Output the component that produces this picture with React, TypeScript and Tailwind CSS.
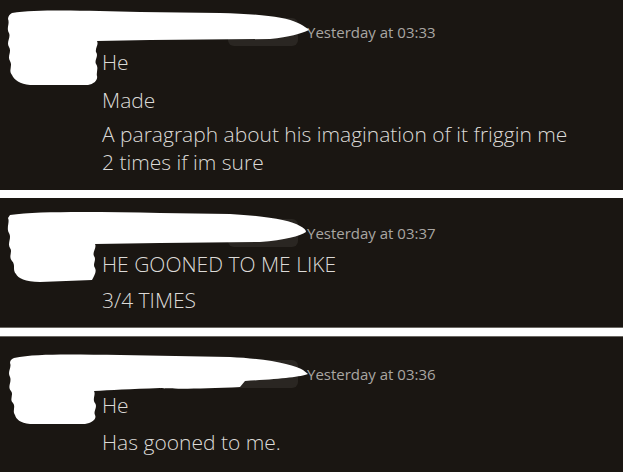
import React from 'react';

type Msg = {
  time: string;
  lines: { text: React.ReactNode; mt: string }[];
  pad: string;
  blob: string;
  border?: string;
};

const messages: Msg[] = [
  {
    time: 'Yesterday at 03:33',
    pad: 'pt-[18px] pb-[14px] h-[190px]',
    blob:
      'M12 13 C40 9 90 11 140 12 L220 13 C260 14 285 17 298 23 C304 26 307 28 309 30 C300 34 290 37 270 39 L150 40 L97 41 C99 45 95 48 96 52 C99 56 94 60 96 64 C99 68 96 72 97 76 C98 80 94 84 88 85 L30 85 C20 84 14 80 12 75 C8 70 13 66 10 61 C7 56 12 52 9 47 C6 42 11 38 9 33 C6 28 10 24 8 19 C8 16 10 14 12 13 Z',
    lines: [
      { text: 'He', mt: 'mt-[2px]' },
      { text: 'Made', mt: 'mt-[10px]' },
      {
        text: (
          <>
            A paragraph about his imagination of it friggin me
            <br />2 times if im sure
          </>
        ),
        mt: 'mt-[6px]',
      },
    ],
  },
  {
    time: 'Yesterday at 03:37',
    pad: 'pt-[21px] h-[130px]',
    border: 'border-b border-[#6b6863]',
    blob:
      'M10 17 C40 13 100 14 160 15 L230 16 C265 18 290 22 300 28 C304 30 306 32 306 34 C300 38 285 42 260 44 L160 45 L95 46 C97 50 92 54 94 58 C97 62 92 66 95 70 C97 74 94 78 92 82 L40 84 C25 84 18 80 16 76 C12 72 16 67 12 63 C8 58 13 54 10 50 C7 45 12 40 9 35 C6 30 10 24 8 20 Z',
    lines: [
      { text: 'HE GOONED TO ME LIKE', mt: 'mt-[3px]' },
      { text: '3/4 TIMES', mt: 'mt-[8px]' },
    ],
  },
  {
    time: 'Yesterday at 03:36',
    pad: 'pt-[23px] h-[136px]',
    border: 'border-t border-[#6b6863]',
    blob:
      'M14 21 C40 16 80 18 120 18 L230 20 C270 22 295 28 303 33 L308 37 C300 40 280 42 245 44 L240 50 C200 52 170 52 160 51 C130 52 110 53 94 54 C96 58 92 62 95 66 C98 70 93 74 95 78 C97 82 92 86 85 87 L30 87 C20 86 16 82 15 78 C12 74 16 70 13 66 C9 62 14 58 11 54 C7 50 12 45 10 40 C7 35 12 30 10 26 C10 23 12 22 14 21 Z',
    lines: [
      { text: 'He', mt: 'mt-[3px]' },
      { text: 'Has gooned to me.', mt: 'mt-[9px]' },
    ],
  },
];

function Panel({ msg }: { msg: Msg }) {
  return (
    <div className={`relative overflow-hidden bg-[#1a1612] pl-[102px] ${msg.pad} ${msg.border ?? ''}`}>
      <div className="flex h-[28px] items-center">
        <span className="w-[120px]" />
        <span className="ml-[6px] h-[28px] w-[70px] rounded-md bg-[#2a2622]" />
        <span className="ml-[9px] text-[15px] text-[#a9a6a2]">{msg.time}</span>
      </div>
      {msg.lines.map((l, i) => (
        <p key={i} className={`${l.mt} text-[21px] leading-[28px] font-light text-[#dcdad7]`}>
          {l.text}
        </p>
      ))}
      <svg className="absolute left-0 top-0 z-10" width="320" height="100" viewBox="0 0 320 100">
        <path d={msg.blob} fill="#ffffff" />
      </svg>
    </div>
  );
}

export default function App() {
  return (
    <div
      className="flex h-[472px] w-[623px] flex-col gap-2 bg-white"
      style={{ fontFamily: '"Open Sans", "Noto Sans", sans-serif' }}
    >
      {messages.map((m, i) => (
        <Panel key={i} msg={m} />
      ))}
    </div>
  );
}
